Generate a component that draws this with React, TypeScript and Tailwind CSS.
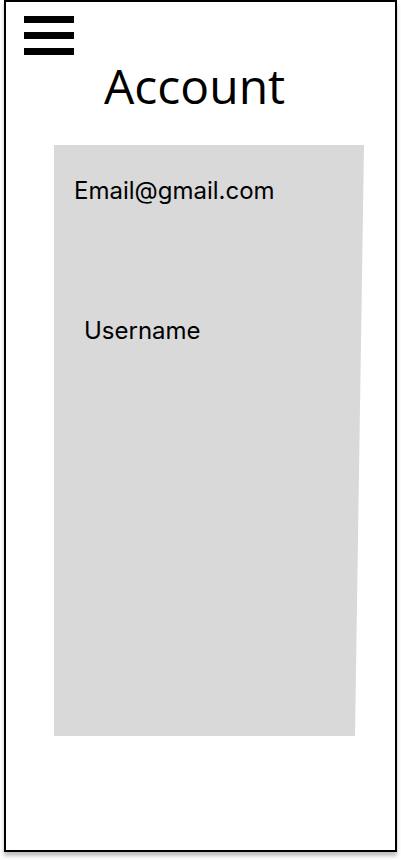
export default function App() {
  return (
    <div className="w-[401px] h-[860px] bg-white">
      <div className="ml-[4px] w-[393px] h-[852px] border-2 border-black bg-white shadow-[0_4px_4px_rgba(0,0,0,0.25)] flex flex-col">
        <div className="mt-[14px] ml-[18px] flex flex-col gap-[9px]">
          <div className="w-[50px] h-[7px] bg-black" />
          <div className="w-[50px] h-[7px] bg-black" />
          <div className="w-[50px] h-[7px] bg-black" />
        </div>
        <div
          className="mt-[7px] ml-[98px] text-[48px] leading-[48px] h-[48px] text-black"
          style={{ fontFamily: '"Open Sans", sans-serif' }}
        >
          Account
        </div>
        <div
          className="mt-[35px] ml-[48px] w-[310px] h-[591px] bg-[#d9d9d9] [clip-path:polygon(0_0,310px_0,301px_100%,0_100%)] flex flex-col"
          style={{ fontFamily: 'Inter, sans-serif' }}
        >
          <div className="mt-[31px] ml-[20px] text-[24px] leading-[29px] text-black">Email@gmail.com</div>
          <div className="mt-[111px] ml-[30px] text-[24px] leading-[29px] text-black">Username</div>
        </div>
      </div>
    </div>
  );
}
